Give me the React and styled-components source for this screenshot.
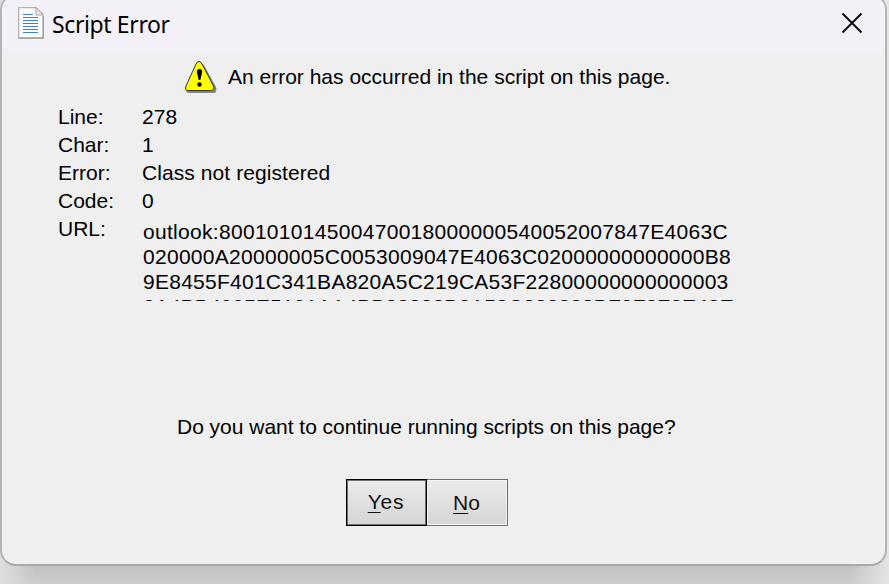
import React from "react";
import styled, { createGlobalStyle } from "styled-components";

const GlobalStyle = createGlobalStyle`
  * { box-sizing: border-box; }
  html, body { margin: 0; height: 584px; overflow: hidden; }
`;

const Desktop = styled.div`
  width: 889px;
  height: 584px;
  overflow: hidden;
  background: linear-gradient(to right, #dedede 0, transparent 35px, transparent 850px, #e4e4e4 889px),
    linear-gradient(to bottom, #f4f4f4 0, #e8e8e8 400px, #c0c0c0 564px, #cdcdcd 584px);
`;

const Dialog = styled.section`
  display: flex;
  flex-direction: column;
  width: 887px;
  height: 572px;
  margin-top: -6px;
  overflow: hidden;
  color: #000;
  background: #efefef;
  border: 2px solid #a9a9a9;
  border-left-color: #b4b4b4;
  border-right-color: #b4b4b4;
  border-radius: 16px;
  font: 21px/28px "Liberation Sans", Arial, sans-serif;
`;

const TitleBar = styled.header`
  display: flex;
  align-items: center;
  flex: 0 0 56px;
  padding: 0 22px 2px 16px;
  background: #f3f1f7;
`;

const Title = styled.h1`
  flex: 1;
  margin: 2px 0 0 8px;
  font: 400 23px/32px "Noto Sans", sans-serif;
  letter-spacing: -0.38px;
`;

const CloseButton = styled.button`
  display: flex;
  padding: 0;
  border: 0;
  background: none;
`;

const Message = styled.div`
  display: flex;
  align-items: center;
  height: 49px;
  padding-left: 182px;
  gap: 11px;
  white-space: nowrap;
`;

const Details = styled.dl`
  display: grid;
  grid-template-columns: 84px 594px;
  grid-auto-rows: 28px;
  margin: 0;
  padding: 2px 0 0 56px;
  white-space: nowrap;
`;

const Term = styled.dt`
  margin: 0;
`;

const Value = styled.dd`
  margin: 0;
  letter-spacing: 0.08px;
`;

const Url = styled.dd`
  height: 86px;
  margin: 0;
  padding: 4px 0 0 1px;
  overflow: hidden;
  line-height: 25px;
`;

const UrlLine = styled.div`
  letter-spacing: ${(p) => p.$spacing}px;
`;

const Question = styled.p`
  margin: 170px 0 0 175px;
  letter-spacing: -0.02px;
  white-space: nowrap;
`;

const Actions = styled.div`
  display: flex;
  margin: 38px 0 0 344px;
`;

const Button = styled.button`
  width: 81px;
  height: 47px;
  padding: ${(p) => (p.$primary ? "0 1px 2px 0" : "0 1px 0 0")};
  color: #111;
  background: linear-gradient(#ebebeb, #d5d5d5);
  border: 1px solid ${(p) => (p.$primary ? "#000" : "#707070")};
  border-left-width: ${(p) => (p.$primary ? 1 : 0)}px;
  box-shadow: inset 0 0 0 1px ${(p) => (p.$primary ? "#707070" : "#f3f3f3")};
  font: 21px/28px "Liberation Sans", Arial, sans-serif;
  letter-spacing: ${(p) => (p.$primary ? 0.8 : 0)}px;
`;

const Mnemonic = styled.span`
  text-decoration: underline;
  text-decoration-thickness: 1px;
  text-underline-offset: 3px;
`;

const DocumentIcon = () => (
  <svg width="26" height="32" viewBox="0 0 26 32">
    <path d="M.7.7H18L25.2 8V31H.7Z" fill="#fcfcfa" stroke="#b0b0b0" strokeWidth="1.3" />
    <path d="M1 31H25.2V9" fill="none" stroke="#929292" />
    <path d="M18 .7V8H25.2Z" fill="#e8e8e8" stroke="#aaa" />
    <path d="M5 7.5H15M5 10.5H20M5 13.5H20M5 16.5H20M5 19.5H20M5 22.5H20M5 25.5H20" stroke="#3f80c5" />
  </svg>
);

const CloseIcon = () => (
  <svg width="22" height="22" viewBox="0 0 22 22">
    <path d="M1.5 1.5L20.5 20.5M20.5 1.5L1.5 20.5" stroke="#111" strokeWidth="2" />
  </svg>
);

const WarningIcon = () => (
  <svg width="33" height="34" viewBox="0 0 33 34">
    <path d="M17 3.5Q19.5 3.5 20.5 6L32 27Q33.5 33 29 33H5Q1 33 3 28Z" fill="#858585" />
    <path d="M15 1.5Q17 1.5 18 4L29.5 26Q31 30.5 26.5 30.5H4Q.5 30.5 2 26L12 4Q13 1.5 15 1.5Z" fill="#ff0" stroke="#333" />
    <path d="M15.5 9Q18.7 9 18 13L16.3 20H14.7L13 13Q12.3 9 15.5 9Z" />
    <circle cx="15.5" cy="24.5" r="2.2" />
  </svg>
);

const urlLines = [
  { text: "outlook:800101014500470018000000540052007847E4063C", spacing: 0.3 },
  { text: "020000A20000005C0053009047E4063C02000000000000B8", spacing: 0.28 },
  { text: "9E8455F401C341BA820A5C219CA53F22800000000000003", spacing: 0.26 },
  { text: "2A4BB4995E5191AA4BB88882B2A58C888888BF2F2F2E48E", spacing: 0.1 },
];

export default function App() {
  return (
    <Desktop>
      <GlobalStyle />
      <Dialog>
        <TitleBar>
          <DocumentIcon />
          <Title>Script Error</Title>
          <CloseButton aria-label="Close"><CloseIcon /></CloseButton>
        </TitleBar>
        <Message>
          <WarningIcon />
          <span>An error has occurred in the script on this page.</span>
        </Message>
        <Details>
          <Term>Line:</Term><Value>278</Value>
          <Term>Char:</Term><Value>1</Value>
          <Term>Error:</Term><Value>Class not registered</Value>
          <Term>Code:</Term><Value>0</Value>
          <Term>URL:</Term>
          <Url>
            {urlLines.map(({ text, spacing }) => (
              <UrlLine key={text} $spacing={spacing}>{text}</UrlLine>
            ))}
          </Url>
        </Details>
        <Question>Do you want to continue running scripts on this page?</Question>
        <Actions>
          <Button $primary><Mnemonic>Y</Mnemonic>es</Button>
          <Button><Mnemonic>N</Mnemonic>o</Button>
        </Actions>
      </Dialog>
    </Desktop>
  );
}
